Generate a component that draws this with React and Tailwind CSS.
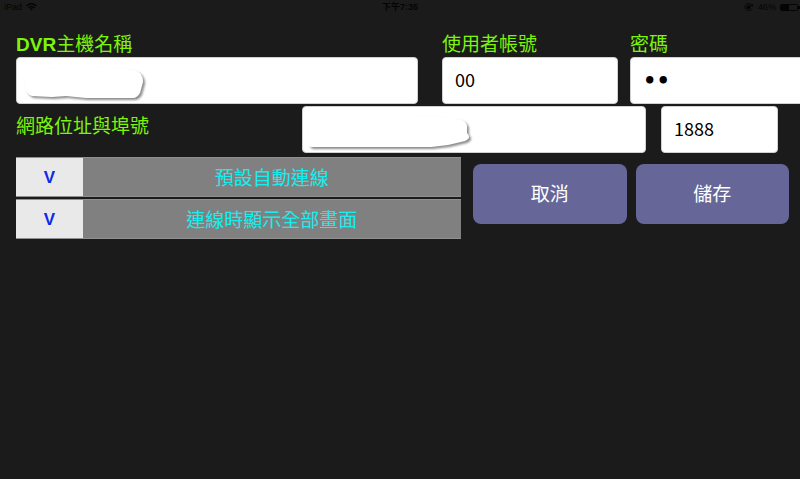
import React from "react";

const labelClass = "block whitespace-nowrap pt-px text-[19px] leading-6 text-[#7df50a]";
const fieldClass =
  "block h-[47px] w-full rounded-[4px] border border-[#d0d0d0] bg-white px-3 text-black outline-none";

function StatusBar() {
  return (
    <header className="grid h-8 grid-cols-3 items-start pt-px text-[9px] leading-3 text-[#040404]">
      <div className="flex items-center gap-1 pl-1">
        <span>iPad</span>
        <svg className="h-2 w-[11px]" viewBox="0 0 22 16" fill="none" stroke="currentColor" strokeWidth="3">
          <path d="M1 6Q11-3 21 6M5 10Q11 4 17 10" />
          <path d="M8 12Q11 9 14 12L11 15Z" fill="currentColor" stroke="none" />
        </svg>
      </div>
      <div className="text-center font-bold">下午7:35</div>
      <div className="flex items-center justify-end gap-1">
        <svg className="h-2 w-[10px]" viewBox="0 0 20 16" fill="none" stroke="currentColor" strokeWidth="1.6">
          <path d="M16 4A8 7 0 1 0 16 12M18 2L17 7L12 5" />
          <rect x="6" y="7" width="6" height="4" fill="currentColor" />
          <path d="M7 7V5Q9 3 11 5V7" />
        </svg>
        <span>46%</span>
        <svg className="h-[7px] w-5" viewBox="0 0 20 7">
          <rect x="0.5" y="0.5" width="17" height="6" rx="1" fill="none" stroke="currentColor" />
          <rect x="1" y="1" width="8" height="5" fill="currentColor" />
          <path d="M18 2H20V5H18Z" fill="currentColor" />
        </svg>
      </div>
    </header>
  );
}

function Patch({ d }) {
  return (
    <svg
      className="pointer-events-none absolute left-1 top-0 h-[46px] w-[168px]"
      viewBox="0 0 168 46"
      aria-hidden="true"
    >
      <path d={d} fill="#fff" className="drop-shadow-[2px_2px_1px_rgba(0,0,0,0.45)]" />
    </svg>
  );
}

function Option({ children }) {
  return (
    <label className="flex h-10 cursor-pointer border-y border-[#909090] bg-[#808080] text-[19px]">
      <input type="checkbox" defaultChecked className="peer sr-only" />
      <span className="flex w-[15%] items-center justify-center bg-[#e9e9e9] pt-px text-[17px] font-bold text-transparent peer-checked:text-[#1028e8]">
        V
      </span>
      <span className="flex flex-1 items-center justify-center pt-1 text-[#16eeee]">{children}</span>
    </label>
  );
}

function Action({ children, type = "button" }) {
  return (
    <button
      type={type}
      className="h-[60px] flex-1 cursor-pointer rounded-lg bg-[#666699] pt-0.5 text-[19px] text-white"
    >
      {children}
    </button>
  );
}

export default function App() {
  return (
    <div className="min-h-screen overflow-x-hidden bg-[#1b1b1b] font-['Liberation_Sans','Noto_Sans_CJK_TC',sans-serif]">
      <StatusBar />
      <form onSubmit={(e) => e.preventDefault()}>
        <div className="flex pl-4">
          <div className="mr-6 min-w-0 flex-[402]">
            <label htmlFor="host" className={labelClass}>
              <b>DVR</b>主機名稱
            </label>
            <div className="relative">
              <input id="host" className={`${fieldClass} pb-1 text-lg`} />
              <Patch d="M3 19Q3 12 9 11L60 10Q90 8 114 13Q123 15 123 25L120 36Q117 41 113 41H66L46 39L32 40L12 39Q6 37 5 29Z" />
            </div>
          </div>
          <div className="mr-3 min-w-0 flex-[176]">
            <label htmlFor="account" className={labelClass}>
              使用者帳號
            </label>
            <div className="font-['Noto_Sans_CJK_TC',sans-serif]">
              <input id="account" defaultValue="00" className={`${fieldClass} pb-1 text-lg`} />
            </div>
          </div>
          <div className="-mr-2 min-w-0 flex-[178]">
            <label htmlFor="password" className={labelClass}>
              密碼
            </label>
            <div className="font-['DejaVu_Sans',sans-serif] font-bold">
              <input
                id="password"
                type="password"
                defaultValue="00"
                className={`${fieldClass} text-[21px]`}
              />
            </div>
          </div>
        </div>

        <div className="mt-0.5 flex pl-4 pr-[22px]">
          <label htmlFor="address" className={`${labelClass} flex-[286]`}>
            <span className="block pt-2">網路位址與埠號</span>
          </label>
          <div className="relative mr-[15px] min-w-0 flex-[344]">
            <input id="address" className={`${fieldClass} pb-1 text-lg`} />
            <Patch d="M2 17Q3 12 12 11L70 9Q110 8 146 12Q160 13 161 20V27Q166 32 159 35L142 39L125 41H5Q1 39 3 36Z" />
          </div>
          <div className="min-w-0 flex-[117] font-['Noto_Sans_CJK_TC',sans-serif]">
            <input
              aria-label="埠號"
              inputMode="numeric"
              defaultValue="1888"
              className={`${fieldClass} pb-1 text-lg`}
            />
          </div>
        </div>

        <div className="mt-1 flex gap-3 pl-4 pr-[11px]">
          <div className="flex flex-[445] flex-col gap-0.5">
            <Option>預設自動連線</Option>
            <Option>連線時顯示全部畫面</Option>
          </div>
          <div className="flex flex-[316] gap-[9px] pt-[7px]">
            <Action>取消</Action>
            <Action type="submit">儲存</Action>
          </div>
        </div>
      </form>
    </div>
  );
}
